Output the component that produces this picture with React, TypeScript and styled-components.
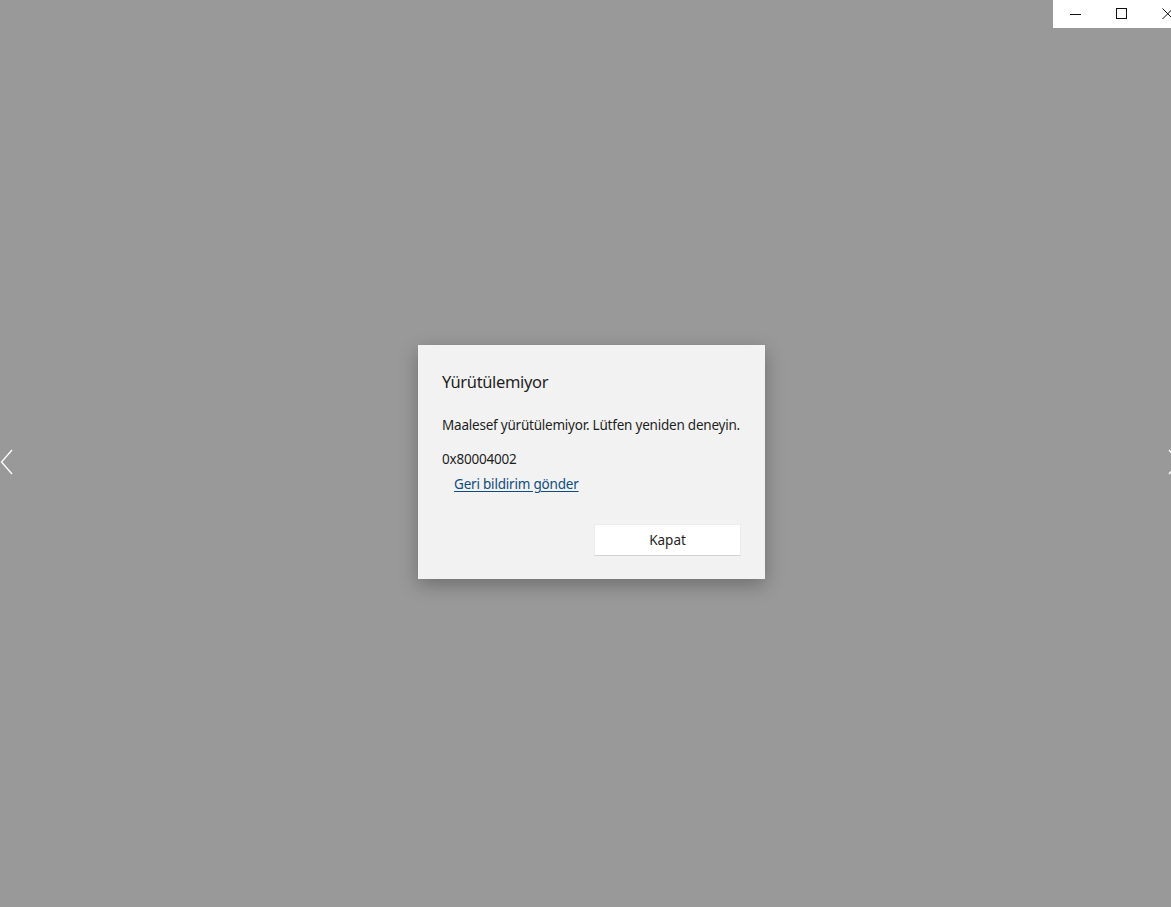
import React from "react";
import styled, { createGlobalStyle } from "styled-components";

const GlobalStyle = createGlobalStyle`
  html, body {
    margin: 0;
    padding: 0;
    background: #999999;
  }
  #root {
    height: 907px;
  }
`;

const Stage = styled.div`
  position: relative;
  height: 100%;
  display: flex;
  align-items: center;
  justify-content: center;
  overflow: hidden;
  font-family: "Noto Sans", "Open Sans", sans-serif;
`;

const CaptionBar = styled.div`
  position: absolute;
  top: 0;
  right: 0;
  width: 118px;
  height: 28px;
  background: #ffffff;
  display: flex;
`;

const CaptionButton = styled.div`
  width: 46px;
  height: 28px;
  flex: none;
  display: flex;
  align-items: center;
  justify-content: center;
  color: #111;
`;

const NavArrow = styled.div<{ $side: "left" | "right" }>`
  position: absolute;
  top: 449px;
  ${(p) => (p.$side === "left" ? "left: 0;" : "right: -10px;")}
  width: 14px;
  height: 26px;
  color: #ffffff;
`;

const Dialog = styled.div`
  margin: 17px 0 0 12px;
  width: 347px;
  height: 234px;
  box-sizing: border-box;
  background: #f2f2f2;
  padding: 26px 24px 0 24px;
  box-shadow: 0 6px 18px rgba(0, 0, 0, 0.28);
  display: flex;
  flex-direction: column;
  color: #1f1f1f;
`;

const Title = styled.h2`
  margin: 0;
  font-size: 16.5px;
  font-weight: 400;
  line-height: 22px;
  letter-spacing: -0.35px;
`;

const Message = styled.p`
  margin: 22px 0 0 0;
  font-size: 13.5px;
  line-height: 20px;
  letter-spacing: -0.22px;
  white-space: nowrap;
`;

const Code = styled.p`
  margin: 14px 0 0 0;
  font-size: 13.5px;
  line-height: 20px;
  letter-spacing: -0.2px;
`;

const FeedbackLink = styled.a`
  margin: 4px 0 0 12px;
  align-self: flex-start;
  font-size: 13.5px;
  line-height: 22px;
  letter-spacing: -0.2px;
  color: #0f4c81;
  text-decoration: underline;
  text-underline-offset: 2px;
  cursor: pointer;
`;

const Footer = styled.div`
  margin-top: 29px;
  display: flex;
  justify-content: flex-end;
`;

const CloseButton = styled.button`
  width: 147px;
  height: 32px;
  border: 1px solid #ececec;
  border-bottom-color: #d2d2d2;
  background: #ffffff;
  font-family: inherit;
  font-size: 13.5px;
  color: #1f1f1f;
  cursor: pointer;
`;

export default function App() {
  return (
    <>
      <GlobalStyle />
      <Stage>
        <CaptionBar>
          <CaptionButton>
            <svg width="12" height="12" viewBox="0 0 12 12">
              <line x1="0" y1="6.5" x2="11" y2="6.5" stroke="currentColor" strokeWidth="1" />
            </svg>
          </CaptionButton>
          <CaptionButton>
            <svg width="12" height="12" viewBox="0 0 12 12">
              <rect x="0.5" y="0.5" width="10" height="10" fill="none" stroke="currentColor" strokeWidth="1" />
            </svg>
          </CaptionButton>
          <CaptionButton>
            <svg width="12" height="12" viewBox="0 0 12 12">
              <path d="M0.5 0.5 L11 11 M11 0.5 L0.5 11" stroke="currentColor" strokeWidth="1" />
            </svg>
          </CaptionButton>
        </CaptionBar>

        <NavArrow $side="left">
          <svg width="14" height="26" viewBox="0 0 14 26">
            <path d="M12 1 L1.5 13 L12 25" fill="none" stroke="currentColor" strokeWidth="1.3" />
          </svg>
        </NavArrow>
        <NavArrow $side="right">
          <svg width="14" height="26" viewBox="0 0 14 26">
            <path d="M2 1 L12.5 13 L2 25" fill="none" stroke="currentColor" strokeWidth="1.3" />
          </svg>
        </NavArrow>

        <Dialog role="dialog">
          <Title>Yürütülemiyor</Title>
          <Message>Maalesef yürütülemiyor. Lütfen yeniden deneyin.</Message>
          <Code>0x80004002</Code>
          <FeedbackLink>Geri bildirim gönder</FeedbackLink>
          <Footer>
            <CloseButton>Kapat</CloseButton>
          </Footer>
        </Dialog>
      </Stage>
    </>
  );
}
